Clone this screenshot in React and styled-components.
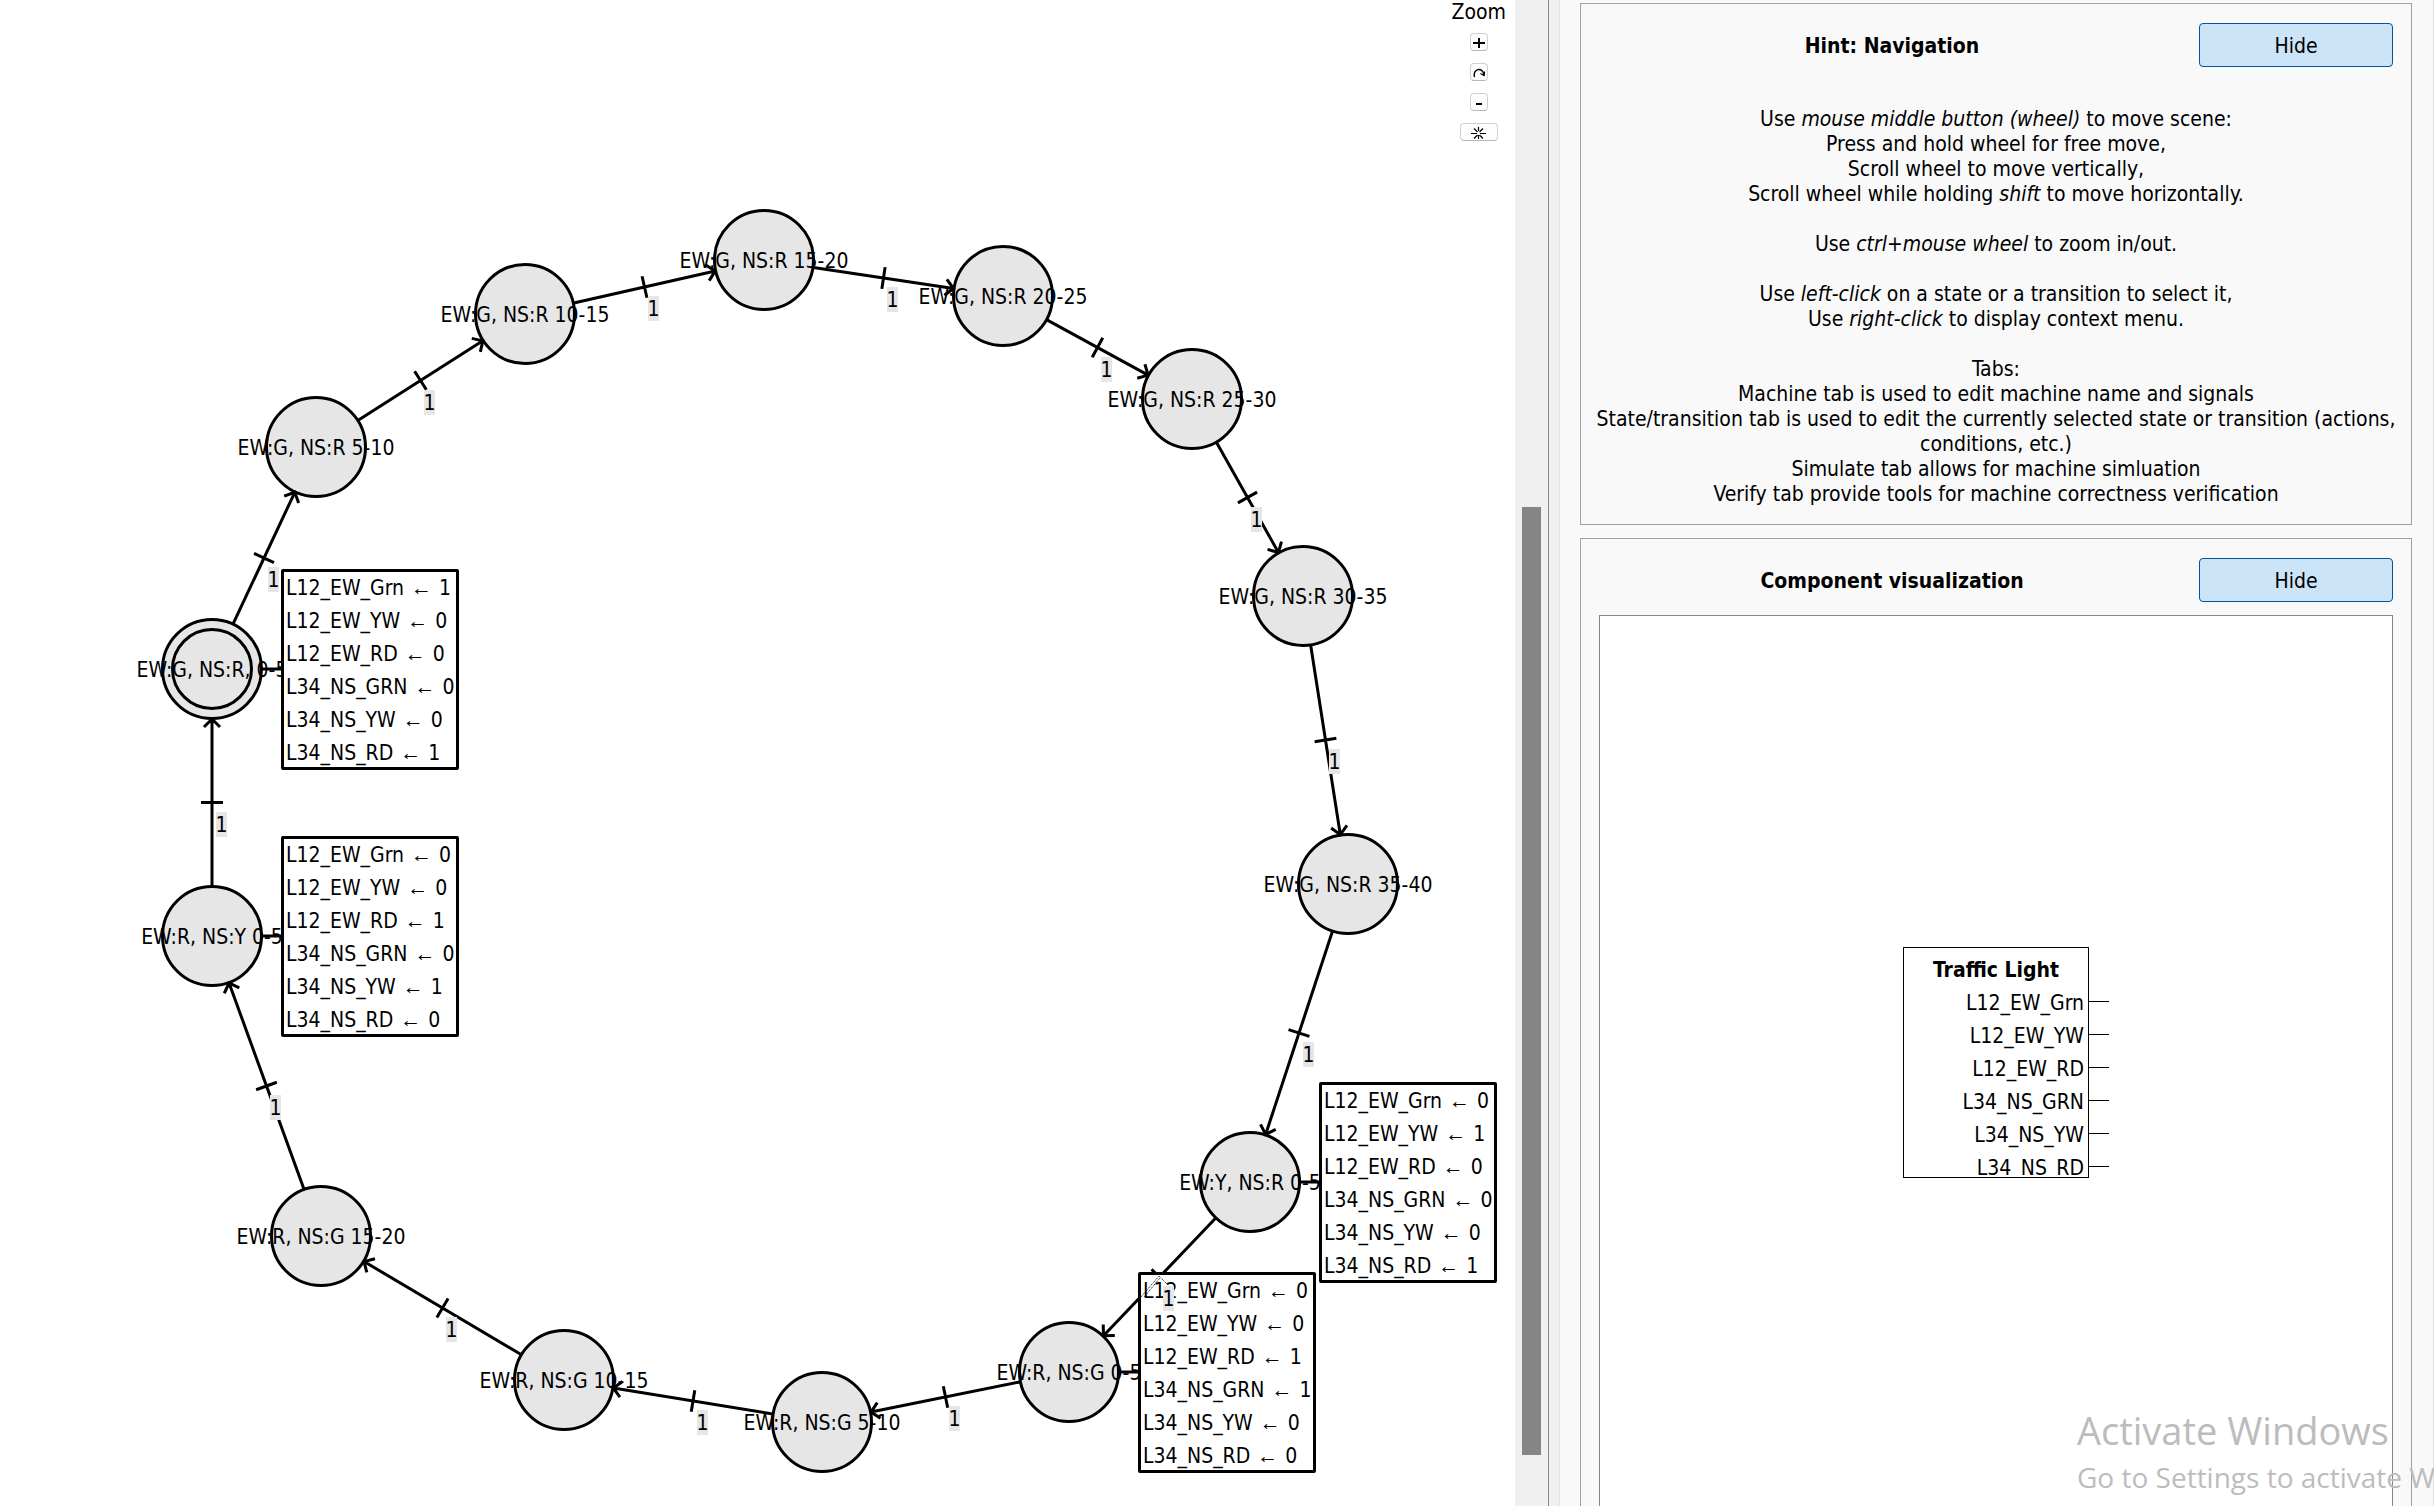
import React from "react";
import styled, { createGlobalStyle } from "styled-components";

const FONT = '"DejaVu Sans Condensed", "Noto Sans", sans-serif';
const RADIUS = 50;

const GlobalStyle = createGlobalStyle`
  *, *::before, *::after { box-sizing: border-box; }
  body {
    margin: 0;
    background: #f9f9f9;
    color: #000;
    font-family: ${FONT};
    font-size: 21px;
    line-height: 25px;
  }
`;

const Window = styled.div`
  display: grid;
  grid-template-columns: minmax(0, 1fr) 11px 874px;
  height: 100vh;
  overflow: hidden;
`;

/* ---------- scene ---------- */

const SceneView = styled.main`
  display: flex;
  min-width: 0;
  overflow: hidden;
  border-right: 1px solid #7f8790;
  background: #fff;
`;

const Scene = styled.div`
  position: relative;
  flex: 1;
  min-width: 0;
  overflow: hidden;
`;

const ScrollTrack = styled.div`
  display: flex;
  flex-direction: column;
  flex: 0 0 33px;
  padding: 0 7px;
  background: #f0f0f0;
`;

const Spacer = styled.div`
  flex: ${(p) => p.$share} 0 0;
`;

const Thumb = styled.div`
  flex: 948 0 0;
  background: #858585;
`;

const Splitter = styled.div`
  background: #f0f0f0;
  border-right: 1px solid #e2e2e2;
`;

const ZoomTools = styled.div`
  position: absolute;
  top: 0;
  right: 9px;
  display: flex;
  flex-direction: column;
  align-items: center;
  gap: 12px;
`;

const ZoomLabel = styled.span`
  height: 21px;
  line-height: 24px;
`;

const ToolButton = styled.button`
  display: flex;
  align-items: center;
  justify-content: center;
  width: ${(p) => (p.$wide ? 38 : 18)}px;
  height: 18px;
  padding: 0;
  border: 1px solid #d0d0d0;
  border-bottom-color: #b8b8b8;
  border-radius: 4px;
  background: #fdfdfd;
`;

const StateNode = styled.div`
  position: absolute;
  left: ${(p) => p.$x - 51}px;
  top: ${(p) => p.$y - 51}px;
  display: flex;
  align-items: center;
  justify-content: center;
  width: 102px;
  height: 102px;
  padding-top: 2px;
  border: 3px solid #000;
  border-radius: 50%;
  background: #e6e6e6;
  white-space: nowrap;

  &::before {
    content: "";
    display: ${(p) => (p.$initial ? "block" : "none")};
    position: absolute;
    inset: 7px;
    border: 3px solid #000;
    border-radius: 50%;
  }
`;

const Edges = styled.svg`
  position: absolute;
  inset: 0;
  width: 100%;
  height: 100%;
  fill: none;
  stroke: #000;
  stroke-width: ${(p) => (p.$thin ? 1 : 3)};
  stroke-dasharray: ${(p) => (p.$thin ? "1 1" : "none")};
`;

const ActionBox = styled.div`
  position: absolute;
  left: ${(p) => p.$x + 69}px;
  top: ${(p) => p.$y - 100}px;
  width: 178px;
  height: 201px;
  padding: 1px 0 0 3px;
  border: 2px solid #000;
  border-radius: 2px;
  box-shadow: inset 0 0 0 1px #000;
  background: #fff;
  line-height: 33px;
  white-space: nowrap;
`;

const Arrow = styled.span`
  margin: 0 1px;
  font-family: "Liberation Sans", sans-serif;
  line-height: 1;
`;

const Condition = styled.span`
  position: absolute;
  left: ${(p) => p.$x + 4}px;
  top: ${(p) => p.$y + 9}px;
  display: flex;
  justify-content: center;
  width: 11px;
  height: 25px;
  line-height: 27px;
  background: #e6e6e6;
`;

/* ---------- side panel ---------- */

const Side = styled.aside`
  display: flex;
  flex-direction: column;
  gap: 13px;
  min-width: 0;
  overflow: hidden;
  padding: 3px 21px 0 20px;
  border-right: 1px solid #e2e2e2;
  background: #f9f9f9;
`;

const Panel = styled.section`
  display: flex;
  flex: none;
  flex-direction: column;
  gap: ${(p) => p.$gap}px;
  padding: 19px 18px 17px;
  border: 1px solid #a0a0a0;
  box-shadow: -1px -1px 0 #fff;
`;

const PanelHeader = styled.header`
  display: flex;
  align-items: center;
  gap: 14px;
`;

const PanelTitle = styled.h2`
  flex: 1;
  margin: 0;
  padding-top: 2px;
  font-size: 21px;
  font-weight: bold;
  text-align: center;
`;

const HideButton = styled.button`
  width: 194px;
  height: 44px;
  padding: 3px 0 0;
  border: 1px solid #00559b;
  border-radius: 4px;
  background: #cce4f7;
  color: #000;
  font: inherit;
`;

const Hint = styled.div`
  margin: 0 -10px;
  text-align: center;
`;

const HintBlock = styled.p`
  margin: 0 0 25px;
  &:last-child { margin-bottom: 0; }
`;

const Preview = styled.div`
  display: flex;
  align-items: center;
  justify-content: center;
  height: 895px;
  border: 1px solid #828790;
  background: #fff;
`;

const Component = styled.div`
  width: 186px;
  height: 231px;
  padding-top: 6px;
  border: 1px solid #000;
  overflow-x: visible;
  overflow-y: clip;
  line-height: 33px;
`;

const ComponentName = styled.div`
  font-weight: bold;
  text-align: center;
`;

const Pin = styled.div`
  position: relative;
  padding-right: 4px;
  text-align: right;

  &::after {
    content: "";
    position: absolute;
    top: 14px;
    left: 100%;
    width: 21px;
    height: 1px;
    background: #000;
  }
`;

const Watermark = styled.div`
  position: absolute;
  right: 0;
  bottom: 0;
  width: 357px;
  padding-bottom: 7px;
  overflow: hidden;
  color: #bcbcbc;
  font-family: "Open Sans", "Noto Sans", sans-serif;
  white-space: nowrap;
  pointer-events: none;
`;

const WatermarkTitle = styled.div`
  font-size: 38px;
  line-height: 50px;
`;

const WatermarkText = styled.div`
  font-size: 28px;
  line-height: 44px;
`;

/* ---------- data ---------- */

const SIGNALS = [
  "L12_EW_Grn",
  "L12_EW_YW",
  "L12_EW_RD",
  "L34_NS_GRN",
  "L34_NS_YW",
  "L34_NS_RD",
];

const STATES = [
  { name: "EW:G, NS:R, 0-5", x: 212, y: 669, initial: true, out: "100001" },
  { name: "EW:G, NS:R 5-10", x: 316, y: 447 },
  { name: "EW:G, NS:R 10-15", x: 525, y: 314 },
  { name: "EW:G, NS:R 15-20", x: 764, y: 260 },
  { name: "EW:G, NS:R 20-25", x: 1003, y: 296 },
  { name: "EW:G, NS:R 25-30", x: 1192, y: 399 },
  { name: "EW:G, NS:R 30-35", x: 1303, y: 596 },
  { name: "EW:G, NS:R 35-40", x: 1348, y: 884 },
  { name: "EW:Y, NS:R 0-5", x: 1250, y: 1182, out: "010001" },
  { name: "EW:R, NS:G 0-5", x: 1069, y: 1372, out: "001100" },
  { name: "EW:R, NS:G 5-10", x: 822, y: 1422 },
  { name: "EW:R, NS:G 10-15", x: 564, y: 1380 },
  { name: "EW:R, NS:G 15-20", x: 321, y: 1236 },
  { name: "EW:R, NS:Y 0-5", x: 212, y: 936, out: "001010" },
];

const TRANSITIONS = STATES.map((from, i) => {
  const to = STATES[(i + 1) % STATES.length];
  return {
    from,
    to,
    x: Math.floor((from.x + to.x) / 2),
    y: Math.round((from.y + to.y) / 2),
  };
});

function Edge({ from, to }) {
  const length = Math.hypot(to.x - from.x, to.y - from.y);
  const angle = (Math.atan2(to.y - from.y, to.x - from.x) * 180) / Math.PI;
  const tip = length - RADIUS;
  const mid = length / 2;
  return (
    <g transform={`translate(${from.x} ${from.y}) rotate(${angle})`}>
      <path
        d={`M${RADIUS} 0H${tip}M${mid} -11V11M${tip - 8} -8L${tip} 0L${tip - 8} 8`}
      />
    </g>
  );
}

export default function App() {
  const withActions = STATES.filter((s) => s.out);
  return (
    <>
      <GlobalStyle />
      <Window>
        <SceneView>
          <Scene>
            {STATES.map((s) => (
              <StateNode key={s.name} $x={s.x} $y={s.y} $initial={s.initial}>
                {s.name}
              </StateNode>
            ))}
            <Edges aria-hidden="true">
              {TRANSITIONS.map((t) => (
                <Edge key={t.from.name} from={t.from} to={t.to} />
              ))}
              {withActions.map((s) => (
                <path key={s.name} d={`M${s.x + RADIUS} ${s.y}h20`} />
              ))}
            </Edges>
            {withActions.map((s) => (
              <ActionBox key={s.name} $x={s.x} $y={s.y}>
                {SIGNALS.map((signal, i) => (
                  <div key={signal}>
                    {signal} <Arrow>←</Arrow> {s.out[i]}
                  </div>
                ))}
              </ActionBox>
            ))}
            <Edges $thin aria-hidden="true">
              <path d="M1141 1297L1159 1276L1167 1284M1144 1297L1160 1278" />
            </Edges>
            {TRANSITIONS.map((t) => (
              <Condition key={t.from.name} $x={t.x} $y={t.y}>
                1
              </Condition>
            ))}
            <ZoomTools>
              <ZoomLabel>Zoom</ZoomLabel>
              <ToolButton aria-label="Zoom in">
                <svg width="12" height="12" fill="none" stroke="#000" strokeWidth="2">
                  <path d="M0 7H12M6 2V12" />
                </svg>
              </ToolButton>
              <ToolButton aria-label="Reset zoom">
                <svg width="12" height="12" fill="none" stroke="#000" strokeWidth="1.4">
                  <path d="M1.5 11C-.5 2.5 9.5 .5 11 8.5M7.5 7.5L11 9.5L12 5.5" />
                </svg>
              </ToolButton>
              <ToolButton aria-label="Zoom out">
                <svg width="12" height="12" fill="none" stroke="#000" strokeWidth="2">
                  <path d="M3 8H9" />
                </svg>
              </ToolButton>
              <ToolButton $wide aria-label="Fit scene">
                <svg width="16" height="16" fill="none" stroke="#000" strokeWidth="1.2">
                  <path d="M0 9.5H6M9 9.5H15M7.5 3V7M7.5 11V15M3 4.500L6.5 8M12 4.500L8.5 8M3 14.500L6.5 11M12 14.500L8.5 11" />
                </svg>
              </ToolButton>
            </ZoomTools>
          </Scene>
          <ScrollTrack>
            <Spacer $share={507} />
            <Thumb />
            <Spacer $share={51} />
          </ScrollTrack>
        </SceneView>
        <Splitter />
        <Side>
          <Panel $gap={40}>
            <PanelHeader>
              <PanelTitle>Hint: Navigation</PanelTitle>
              <HideButton>Hide</HideButton>
            </PanelHeader>
            <Hint>
              <HintBlock>
                Use <em>mouse middle button (wheel)</em> to move scene:
                <br />
                Press and hold wheel for free move,
                <br />
                Scroll wheel to move vertically,
                <br />
                Scroll wheel while holding <em>shift</em> to move horizontally.
              </HintBlock>
              <HintBlock>
                Use <em>ctrl+mouse wheel</em> to zoom in/out.
              </HintBlock>
              <HintBlock>
                Use <em>left-click</em> on a state or a transition to select it,
                <br />
                Use <em>right-click</em> to display context menu.
              </HintBlock>
              <HintBlock>
                Tabs:
                <br />
                Machine tab is used to edit machine name and signals
                <br />
                State/transition tab is used to edit the currently selected state or transition (actions, conditions, etc.)
                <br />
                Simulate tab allows for machine simluation
                <br />
                Verify tab provide tools for machine correctness verification
              </HintBlock>
            </Hint>
          </Panel>
          <Panel $gap={13}>
            <PanelHeader>
              <PanelTitle>Component visualization</PanelTitle>
              <HideButton>Hide</HideButton>
            </PanelHeader>
            <Preview>
              <Component>
                <ComponentName>Traffic Light</ComponentName>
                {SIGNALS.map((signal) => (
                  <Pin key={signal}>{signal}</Pin>
                ))}
              </Component>
            </Preview>
          </Panel>
        </Side>
      </Window>
      <Watermark>
        <WatermarkTitle>Activate Windows</WatermarkTitle>
        <WatermarkText>Go to Settings to activate W</WatermarkText>
      </Watermark>
    </>
  );
}
